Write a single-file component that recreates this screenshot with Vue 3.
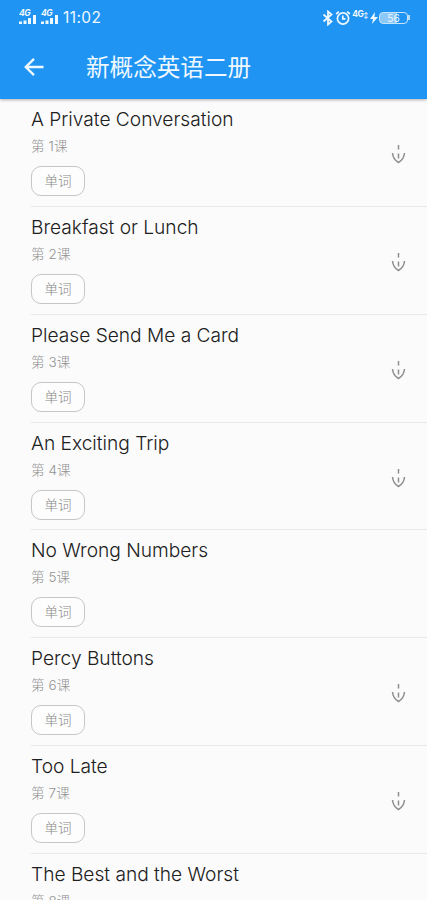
<script setup>
const lessons = [
  { title: 'A Private Conversation', download: true },
  { title: 'Breakfast or Lunch', download: true },
  { title: 'Please Send Me a Card', download: true },
  { title: 'An Exciting Trip', download: true },
  { title: 'No Wrong Numbers', download: false },
  { title: 'Percy Buttons', download: true },
  { title: 'Too Late', download: true },
  { title: 'The Best and the Worst', download: true },
]
</script>

<template>
  <div class="screen">
    <header class="top">
      <div class="status">
        <div class="signals">
          <svg v-for="n in 2" :key="n" class="signal" viewBox="0 0 18 16" width="18" height="16">
            <text x="0" y="7" font-size="8.5" font-weight="700" font-style="italic" letter-spacing="-.4">4G</text>
            <path d="M0 12.500h3v2.500H0zM4.500 11.500h3V15h-3zM9 9h3v6H9zM14 6h3v9h-3z" />
          </svg>
        </div>
        <span class="clock">11:02</span>
        <div class="indicators">
          <svg width="12" height="16" viewBox="0 0 12 16" fill="none" stroke="currentColor" stroke-width="1.800">
            <path d="M1.500 4.500l8 7L6 14.500V1.500l3.500 3-8 7" />
          </svg>
          <svg class="alarm" width="16" height="16" viewBox="0 0 16 16" fill="none" stroke="currentColor" stroke-width="1.700">
            <circle cx="8" cy="8.500" r="5.600" />
            <path d="M7.800 5.500v3.300h2.700M1.200 4l2.600-2.300M14.800 4l-2.600-2.300" />
          </svg>
          <span class="network">4G<small>↕</small></span>
          <svg class="bolt" width="8" height="12" viewBox="0 0 8 12"><path d="M5 0L0 7h3l-1 5 6-7H4.500z" /></svg>
          <div class="battery"><span>56</span></div>
          <i class="cap"></i>
        </div>
      </div>
      <div class="bar">
        <svg width="22" height="22" viewBox="0 0 22 22" fill="none" stroke="currentColor" stroke-width="2.400">
          <path d="M20.500 11H3M11 2.800L2.800 11l8.200 8.200" />
        </svg>
        <h1>新概念英语二册</h1>
      </div>
    </header>
    <main>
      <article v-for="(lesson, i) in lessons" :key="lesson.title" class="lesson">
        <div class="info">
          <h2>{{ lesson.title }}</h2>
          <p>第 {{ i + 1 }}课</p>
          <button>单词</button>
        </div>
        <svg v-if="lesson.download" class="download" width="16" height="22" viewBox="0 0 16 22" fill="none" stroke="currentColor" stroke-width="1.500">
          <path d="M8.500 1v4.500M8.500 9.500v5M2.500 9C3 14.500 5 16.500 8.500 18.500c3.500-2 5.500-4 6-9.500" />
        </svg>
      </article>
    </main>
  </div>
</template>

<style>
body { background: #fbfbfb; }
</style>

<style scoped>
.screen {
  height: 900px;
  overflow: hidden;
  background: #fbfbfb;
  font-family: Inter, "Noto Sans CJK SC", sans-serif;
}
.top {
  position: relative;
  height: 99px;
  color: #eef8ff;
  background: #2094f3;
  box-shadow: 0 1px 3px rgba(0, 0, 0, .3);
}
.status { display: flex; align-items: center; height: 35px; padding: 0 17px 0 19px; }
.signals { display: flex; gap: 4px; padding-bottom: 1px; }
.signal { fill: currentColor; }
.clock { margin-left: 4px; padding-top: 1px; font-size: 15.500px; line-height: 18px; letter-spacing: .4px; }
.indicators { display: flex; align-items: center; margin-left: auto; }
.alarm { margin-left: 1px; }
.network { display: flex; align-self: flex-start; margin-left: 1px; font-size: 8.500px; font-weight: 700; line-height: 9px; letter-spacing: -.5px; }
.network small { font-size: 6px; }
.bolt { margin-left: 2px; fill: currentColor; }
.battery {
  display: flex;
  align-items: center;
  justify-content: center;
  box-sizing: border-box;
  width: 29px;
  height: 12px;
  margin-left: 1px;
  border: 1px solid #c5e5fd;
  border-radius: 4px;
  background: linear-gradient(90deg, #8cc8f8 64%, #2094f3 64%);
  font-size: 10px;
  line-height: 10px;
}
.cap { width: 2px; height: 5px; background: #b5ddfb; }
.bar { display: flex; align-items: center; height: 64px; padding-left: 23px; }
h1 { margin: 2px 0 0 41px; font-size: 23.600px; font-weight: 400; line-height: 30px; }
main { padding-top: .25px; }
.lesson {
  display: flex;
  align-items: flex-start;
  justify-content: space-between;
  box-sizing: border-box;
  height: 107.800px;
  margin-left: 31px;
  padding: 8px 21px 0 0;
  border-bottom: 1px solid #e9e9e9;
}
h2 { margin: 0; color: #202020; font-size: 19.150px; font-weight: 300; line-height: 25px; white-space: nowrap; }
p { margin: 5px 0 0; color: #929292; font-size: 13.500px; font-weight: 300; line-height: 18px; letter-spacing: .1px; }
button {
  display: block;
  box-sizing: border-box;
  width: 54px;
  height: 30px;
  margin: 11px 0 0;
  padding: 0;
  border: 1px solid #c6c6c6;
  border-radius: 10px;
  color: #888;
  background: #fdfdfd;
  font: 300 13.500px/28px Inter, "Noto Sans CJK SC", sans-serif;
}
.download { flex: none; margin-top: 37px; color: #8e8e8e; }
</style>
